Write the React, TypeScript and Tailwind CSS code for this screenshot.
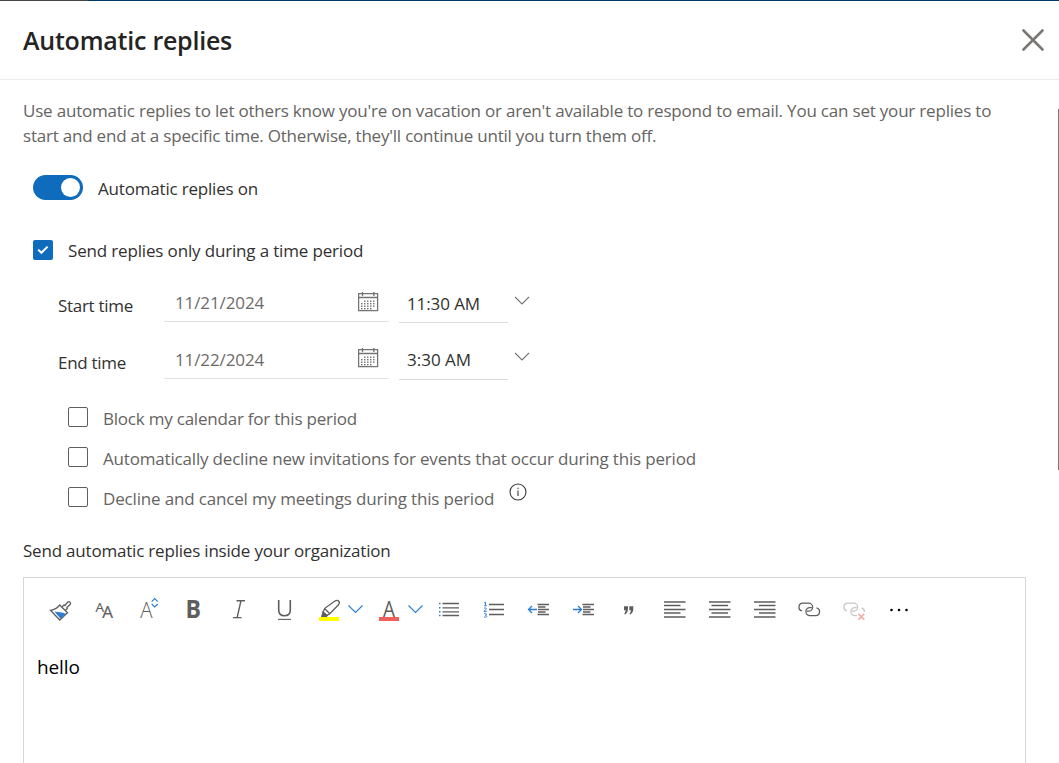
import React, { type ReactNode } from "react";

const GRAY = "#605e5c";
const BLUE = "#2b7cd3";

function Tool({ label, wide, children }: { label: string; wide?: boolean; children: ReactNode }) {
  return (
    <button aria-label={label} className={wide ? "h-10 w-[60px] shrink-0" : "h-10 w-[45px] shrink-0"}>
      <svg width={wide ? 60 : 45} height="40" fill="none" stroke={GRAY} strokeWidth="1.3" fontFamily="'Open Sans', sans-serif">
        {children}
      </svg>
    </button>
  );
}

function CalendarIcon() {
  const dots: [number, number][] = [];
  for (let row = 0; row < 4; row++) {
    for (let col = 0; col < 5; col++) {
      if ((row === 0 && col === 0) || (row === 3 && col === 4)) continue;
      dots.push([3 + col * 3, 8.5 + row * 2.5]);
    }
  }
  return (
    <svg width="21" height="20" viewBox="0 0 21 20" fill="none" stroke="#767472" strokeWidth="1.3" className="shrink-0">
      <path d="M.6 1.7h19v16.9H.6zM.6 5.5h19M4.5 0v4M15.8 0v4" />
      {dots.map(([x, y]) => (
        <rect key={`${x}-${y}`} x={x} y={y} width="1.5" height="1.4" fill="#767472" stroke="none" />
      ))}
    </svg>
  );
}

function Chevron() {
  return (
    <svg width="16" height="10" viewBox="0 0 16 10" fill="none" stroke="#767472" strokeWidth="1.1" className="shrink-0">
      <path d="M1 1l7 7 7-7" />
    </svg>
  );
}

type TimeRowProps = {
  label: string;
  date: string;
  time: string;
  labelTrack: string;
  timeTrack: string;
  timePad: string;
  iconPad: string;
};

function TimeRow({ label, date, time, labelTrack, timeTrack, timePad, iconPad }: TimeRowProps) {
  return (
    <div className="flex h-[57px] pl-[58px]">
      <div className={`mt-[14px] w-[106px] leading-6 text-[#323130] ${labelTrack}`}>{label}</div>
      <div className="flex h-[42px] w-[225px] justify-between rounded-xs border-b border-[#e1dfdd] pr-[10px] pl-[11px] text-[#6d6b69]">
        <span className="pt-[11px] leading-6 tracking-[-0.1px]">{date}</span>
        <span className={iconPad}>
          <CalendarIcon />
        </span>
      </div>
      <div className={`ml-[10px] h-[43px] w-[109px] border-b border-[#dddbd9] pl-2 leading-6 text-[#323130] ${timePad} ${timeTrack}`}>{time}</div>
      <div className={`ml-[6px] ${iconPad}`}>
        <div className="pt-1">
          <Chevron />
        </div>
      </div>
    </div>
  );
}

function Option({ label, track, info }: { label: string; track: string; info?: boolean }) {
  return (
    <div className="flex h-10 items-start pl-[68px]">
      <span className="h-5 w-5 shrink-0 rounded-xs border border-[#605e5c]" />
      <span className={`ml-[15px] leading-6 text-[#666462] ${track}`}>{label}</span>
      {info && (
        <svg width="18" height="18" viewBox="0 0 18 18" fill="none" stroke="#3b3a39" strokeWidth="1.1" className="-mt-1 ml-[15px]">
          <circle cx="9" cy="9" r="8" />
          <path d="M9 7.5V13M9 4.7v1.3" />
        </svg>
      )}
    </div>
  );
}

function Lines({ rows }: { rows: [number, number, number][] }) {
  return <path d={rows.map(([x, y, w]) => `M${x} ${y}h${w}`).join("")} />;
}

function Toolbar() {
  return (
    <div className="flex h-10 items-center">
      <Tool label="Format painter">
        <path d="M13.5 20.3l9.2 9.7 7.8-7.3-7.8-7.700c-2.3 2.900-5.300 4.700-9.200 5.300z" />
        <path d="M17.500 21.500c3.800.6 7.500.7 11.300 2.200l-5.300 5z" fill={BLUE} stroke="none" />
        <path d="M24.800 17l2.200-2 .9.600 2.700-3.300a1.600 1.600 0 0 1 2.500 2.300l-3.200 2.900.4 1-2 2" />
      </Tool>
      <Tool label="Font">
        <text x="13.500" y="21.500" fontSize="13.500" fill={GRAY} stroke={GRAY} strokeWidth="0.200">A</text>
        <text x="20.200" y="27.500" fontSize="17" fill={GRAY} stroke={GRAY} strokeWidth="0.200">A</text>
      </Tool>
      <Tool label="Font size">
        <text x="13.300" y="27.700" fontSize="22" fontWeight="300" fill={GRAY} stroke="none" textLength="12.300" lengthAdjust="spacingAndGlyphs">A</text>
        <path d="M24.700 11.600l3-3 3 3M24.700 14l3 3 3-3" stroke={BLUE} strokeWidth="1.100" />
      </Tool>
      <Tool label="Bold">
        <text x="13.500" y="27.700" fontSize="24.500" fontWeight="700" fill={GRAY} stroke="none" textLength="15.500" lengthAdjust="spacingAndGlyphs">B</text>
      </Tool>
      <Tool label="Italic">
        <path d="M19.500 10.700h8.500M16 27.600h8.500M24 10.700l-3.900 16.900" strokeWidth="1.400" />
      </Tool>
      <Tool label="Underline">
        <path d="M16.700 10v9.700q0 6 5.800 6t5.800-6V10" strokeWidth="1.600" />
        <path d="M16 29.400h13" strokeWidth="1.100" />
      </Tool>
      <Tool label="Highlight" wide>
        <path d="M16 22.300l1.800-4L27.200 11.500c2-1.300 3.800-1.200 4.600-.3s.6 2.600-.7 4L22.500 24l-4 2" />
        <path d="M15.700 20.800l5.500 4.700-1.500 1.500h-5.700z" fill={GRAY} stroke="none" />
        <path d="M17.500 18.500l5.300 5.300" />
        <path d="M12 27h20v4H12z" fill="#ffff00" stroke="none" />
        <path d="M41.500 15.500l7 7 7-7" stroke={BLUE} strokeWidth="1.100" />
      </Tool>
      <Tool label="Font color" wide>
        <text x="16" y="26.500" fontSize="21" fill={GRAY} stroke="none" textLength="12" lengthAdjust="spacingAndGlyphs">A</text>
        <path d="M12 27h20v4H12z" fill="#f0605c" stroke="none" />
        <path d="M41.500 15.500l7 7 7-7" stroke={BLUE} strokeWidth="1.100" />
      </Tool>
      <Tool label="Bulleted list">
        <path d="M12 13.500h1.500M12 17.700h1.500M12 21.700h1.500M12 25.500h1.500" stroke={BLUE} strokeWidth="1.500" />
        <Lines rows={[[15.5, 13.5, 16.5], [15.5, 17.8, 16.5], [15.5, 21.8, 16.5], [15.5, 25.5, 16.5]]} />
      </Tool>
      <Tool label="Numbered list">
        <path d="M12 13l1.500-.8v3.500M12 15.700h3M12 18.300c1-.8 2.500-.4 2.500.5 0 1-2.500 1.300-2.500 2.600h3M12 23.700c1-.6 2.500-.3 2.500.6s-1 .9-1.500.9c.5 0 1.700.2 1.700 1.100s-1.600 1.300-2.700.6" stroke={BLUE} strokeWidth="0.900" />
        <Lines rows={[[17, 14.5, 15], [17, 19.5, 15], [17, 24.5, 15]]} />
      </Tool>
      <Tool label="Decrease indent">
        <path d="M20 19.500h-8.500M15 16l-3.500 3.500L15 23" stroke={BLUE} />
        <Lines rows={[[20.5, 14.5, 11.5], [21, 17, 7.5], [21, 19.5, 11], [21, 22, 7.5], [20.5, 24.5, 11.5]]} />
      </Tool>
      <Tool label="Increase indent">
        <path d="M11 19.500h8.500M16 16l3.500 3.500-3.500 3.500" stroke={BLUE} />
        <Lines rows={[[20.5, 14.5, 11.5], [21, 17, 7.5], [21, 19.5, 11], [21, 22, 7.5], [20.5, 24.5, 11.5]]} />
      </Tool>
      <Tool label="Quote">
        <path d="M17 16.200h4v3q0 3.300-2.400 5h-1.500q1.400-1.700 1.500-3.900H17zM22.300 16.200h4v3q0 3.300-2.400 5h-1.500q1.400-1.700 1.500-3.900h-1.600z" fill={GRAY} stroke="none" />
      </Tool>
      <Tool label="Align left">
        <Lines rows={[[12, 12, 21.5], [12, 15.5, 16.5], [12, 19.5, 21.5], [12, 23, 16.5], [12, 27, 21.5]]} />
      </Tool>
      <Tool label="Align center">
        <Lines rows={[[12, 12, 21.5], [14.5, 15.5, 16.5], [12, 19.5, 21.5], [14.5, 23, 16.5], [12, 27, 21.5]]} />
      </Tool>
      <Tool label="Align right">
        <Lines rows={[[12, 12, 21.5], [17, 15.5, 16.5], [12, 19.5, 21.5], [17, 23, 16.5], [12, 27, 21.5]]} />
      </Tool>
      <Tool label="Insert link">
        <path d="M15 20.900a3.900 3.900 0 0 1 .8-7.700h5.800a4 4 0 0 1 0 8h-1.800" />
        <path d="M29.500 17.900a3.900 3.900 0 0 1-.8 7.700h-5.800a4 4 0 0 1 0-8h1.800" />
      </Tool>
      <Tool label="Remove link">
        <g stroke="#c8c6c4">
          <path d="M15 20.900a3.900 3.900 0 0 1 .8-7.700h5.800a4 4 0 0 1 0 8h-1.800" />
          <path d="M29.500 17.900c2 .5 3 2.100 2.900 4M25 25.600h-2.100a4 4 0 0 1 0-8h1.800" />
        </g>
        <path d="M26.300 23.800l6 5.800M32.300 23.800l-6 5.800" stroke="#eeb0a8" strokeWidth="1.700" />
      </Tool>
      <Tool label="More options">
        <g fill="#000" stroke="none">
          <circle cx="14.500" cy="20" r="1.300" />
          <circle cx="22" cy="20" r="1.300" />
          <circle cx="29.500" cy="20" r="1.300" />
        </g>
      </Tool>
    </div>
  );
}

export default function App() {
  return (
    <div className="relative flex h-[763px] w-[1059px] flex-col overflow-hidden bg-white font-['Open_Sans',sans-serif] text-[17px] whitespace-nowrap">
      <div className="flex h-px shrink-0">
        <div className="w-[88px] bg-[#444444]" />
        <div className="grow bg-[#003966]" />
      </div>
      <header className="flex h-[79px] shrink-0 items-center justify-between border-b border-[#edebe9] pr-[15px] pl-[23px]">
        <h1 className="text-[25px] leading-8 font-semibold tracking-[-0.23px] text-[#252423]">Automatic replies</h1>
        <button aria-label="Close">
          <svg width="22" height="22" viewBox="0 0 22 22" stroke="#7a7876" strokeWidth="2.6" strokeLinecap="round">
            <path d="M1.500 1.500l19 19M20.500 1.500l-19 19" />
          </svg>
        </button>
      </header>

      <div className="mt-[18px] pl-[23px] leading-[25px] text-[#666462]">
        <p className="tracking-[-0.2px]">Use automatic replies to let others know you're on vacation or aren't available to respond to email. You can set your replies to</p>
        <p className="tracking-[-0.21px]">start and end at a specific time. Otherwise, they'll continue until you turn them off.</p>
      </div>

      <div className="mt-[27px] flex h-[25px] items-center gap-[15px] pl-[33px]">
        <span className="flex h-[25px] w-[50px] items-center justify-end rounded-full bg-[#0f6cbd] pr-[3px]">
          <span className="h-[19px] w-[19px] rounded-full bg-white" />
        </span>
        <span className="pt-0.5 leading-6 tracking-[-0.19px] text-[#323130]">Automatic replies on</span>
      </div>

      <div className="mt-[38px] flex h-6 items-center gap-[15px] pl-[33px]">
        <span className="flex h-5 w-5 items-center justify-center rounded-xs bg-[#0f6cbd]">
          <svg width="12" height="10" viewBox="0 0 12 10" fill="none" stroke="#fff" strokeWidth="2">
            <path d="M1.200 4.600l3.200 3.200 6.200-6.200" />
          </svg>
        </span>
        <span className="pt-px leading-6 tracking-[-0.16px] text-[#323130]">Send replies only during a time period</span>
      </div>

      <div className="mt-[18px]">
        <TimeRow label="Start time" date="11/21/2024" time="11:30 AM" labelTrack="tracking-[-0.29px]" timeTrack="tracking-[-0.1px]" timePad="pt-[12px]" iconPad="pt-[12px]" />
        <TimeRow label="End time" date="11/22/2024" time="3:30 AM" labelTrack="tracking-[-0.29px]" timeTrack="tracking-[0px]" timePad="pt-[11px]" iconPad="pt-[11px]" />
      </div>

      <div className="mt-[13px]">
        <Option label="Block my calendar for this period" track="tracking-[-0.217px]" />
        <Option label="Automatically decline new invitations for events that occur during this period" track="tracking-[-0.181px]" />
        <Option label="Decline and cancel my meetings during this period" track="tracking-[-0.165px]" info />
      </div>

      <div className="mt-[12px] pl-[23px] leading-6 tracking-[-0.2px] text-[#323130]">Send automatic replies inside your organization</div>

      <div className="mt-[14px] mr-[33px] ml-[23px] grow border border-b-0 border-[#d9d7d5] pt-[12px] pl-[13px]">
        <Toolbar />
        <p className="mt-6 text-[19px] leading-[26px] tracking-[-0.1px] text-black">hello</p>
      </div>

      <div className="absolute top-[109px] right-0 h-[361px] w-px bg-[#7a7876]" />
    </div>
  );
}
